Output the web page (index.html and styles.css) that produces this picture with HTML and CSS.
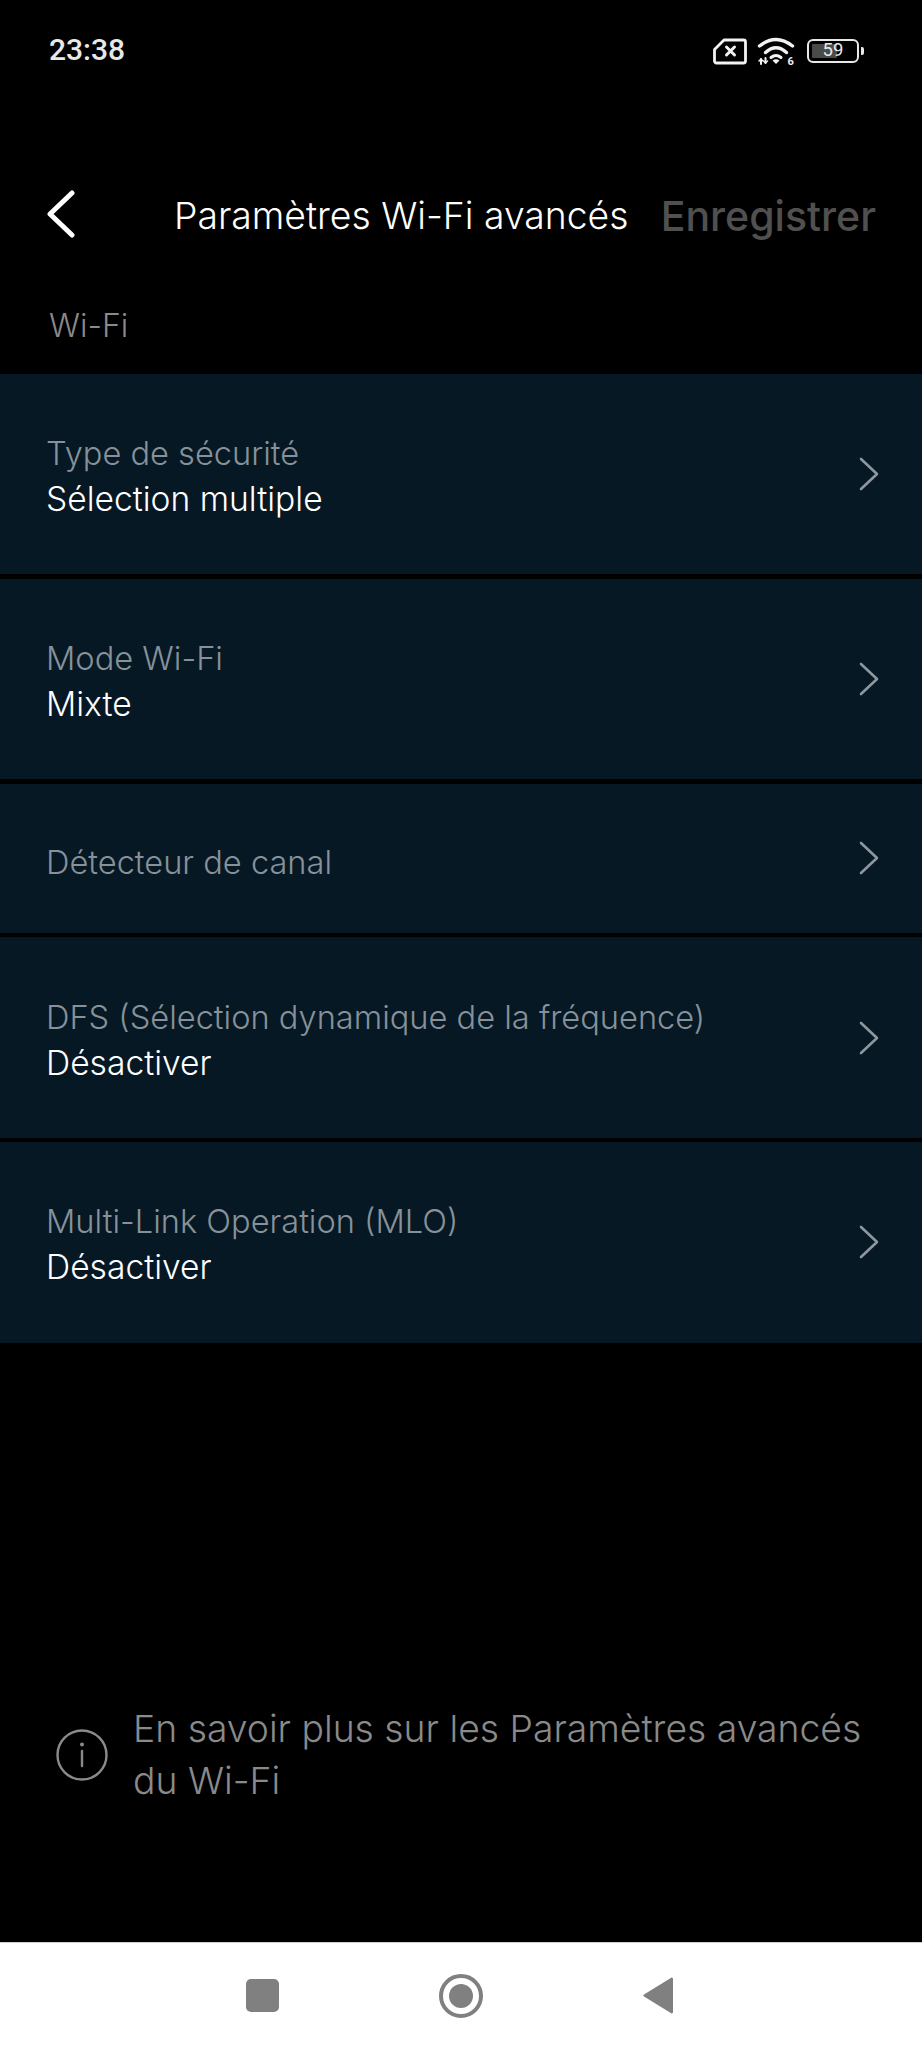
FILE: index.html
```html
<!DOCTYPE html>
<html lang="fr">
<head>
<meta charset="utf-8">
<title>Paramètres Wi-Fi avancés</title>
<link rel="stylesheet" href="styles.css">
</head>
<body>
<div class="screen">
  <div class="status">
    <span class="time">23:38</span>
    <div class="status-icons">
      <svg class="ic-sim" width="34" height="27" viewBox="0 0 34 27" fill="none" stroke="#f2f2f2" stroke-width="2.8" stroke-linejoin="round" stroke-linecap="round"><path d="M11 2H30.500a2 2 0 0 1 2 2V23a2 2 0 0 1-2 2H3.500a2 2 0 0 1-2-2V11.500Z"/><path d="M13.500 9l8 8M21.500 9l-8 8" stroke-width="3"/></svg>
      <svg class="ic-wifi" width="38" height="34" viewBox="0 0 38 34" fill="none" stroke="#f2f2f2" stroke-linecap="round"><path d="M2.500 9Q19-4 35.500 9" stroke-width="3.400"/><path d="M8.500 15.500Q19 6 29.500 15.500" stroke-width="3.400"/><path d="M14 20.500Q19 16.500 24 20.500" stroke-width="3"/><path d="M15.500 23.500Q19 21 22.500 23.500L19 27Z" fill="#f2f2f2" stroke="none"/><path d="M4 22v5M8.500 21v5" stroke-width="2"/><path d="M2 24l2-2 2 2M6.500 24l2 2 2-2" stroke-width="1.500"/><text x="30.500" y="27.500" class="wifi-six">6</text></svg>
      <div class="battery"><div class="battery-body"><div class="battery-fill"></div><span class="battery-num">59</span></div><div class="battery-tip"></div></div>
    </div>
  </div>

  <header class="nav">
    <svg class="back" width="30" height="48" viewBox="0 0 30 48" fill="none" stroke="#fff" stroke-width="5" stroke-linecap="round" stroke-linejoin="round"><path d="M26 3L4 24l22 21"/></svg>
    <h1 class="title">Paramètres Wi-Fi avancés</h1>
    <span class="save">Enregistrer</span>
  </header>

  <div class="section">Wi-Fi</div>

  <div class="list">
    <div class="row">
      <div class="row-text"><div class="label">Type de sécurité</div><div class="value">Sélection multiple</div></div>
      <svg class="chev" width="22" height="34" viewBox="0 0 22 34" fill="none" stroke="#8e979e" stroke-width="2.600" stroke-linecap="round" stroke-linejoin="round"><path d="M3 2l16 15L3 32"/></svg>
    </div>
    <div class="row">
      <div class="row-text"><div class="label">Mode Wi-Fi</div><div class="value">Mixte</div></div>
      <svg class="chev" width="22" height="34" viewBox="0 0 22 34" fill="none" stroke="#8e979e" stroke-width="2.600" stroke-linecap="round" stroke-linejoin="round"><path d="M3 2l16 15L3 32"/></svg>
    </div>
    <div class="row row-short">
      <div class="row-text"><div class="label">Détecteur de canal</div></div>
      <svg class="chev" width="22" height="34" viewBox="0 0 22 34" fill="none" stroke="#8e979e" stroke-width="2.600" stroke-linecap="round" stroke-linejoin="round"><path d="M3 2l16 15L3 32"/></svg>
    </div>
    <div class="row">
      <div class="row-text"><div class="label">DFS (Sélection dynamique de la fréquence)</div><div class="value">Désactiver</div></div>
      <svg class="chev" width="22" height="34" viewBox="0 0 22 34" fill="none" stroke="#8e979e" stroke-width="2.600" stroke-linecap="round" stroke-linejoin="round"><path d="M3 2l16 15L3 32"/></svg>
    </div>
    <div class="row">
      <div class="row-text"><div class="label">Multi-Link Operation (MLO)</div><div class="value">Désactiver</div></div>
      <svg class="chev" width="22" height="34" viewBox="0 0 22 34" fill="none" stroke="#8e979e" stroke-width="2.600" stroke-linecap="round" stroke-linejoin="round"><path d="M3 2l16 15L3 32"/></svg>
    </div>
  </div>

  <div class="spacer"></div>

  <div class="info">
    <svg class="info-ic" width="52" height="52" viewBox="0 0 52 52" fill="none" stroke="#8a8a8a" stroke-width="2.400" stroke-linecap="round"><circle cx="26" cy="26" r="24.500"/><path d="M26 22v15"/><circle cx="26" cy="15.500" r="2" fill="#8a8a8a" stroke="none"/></svg>
    <p class="info-text">En savoir plus sur les Paramètres avancés du Wi-Fi</p>
  </div>

  <div class="navbar">
    <div class="nav-square"></div>
    <div class="nav-circle"><div class="nav-dot"></div></div>
    <svg class="nav-back" width="30" height="37" viewBox="0 0 30 37"><path d="M30 2V35a1.300 1.300 0 0 1-2.200 1L1 19.500a1.300 1.300 0 0 1 0-2L27.800 1a1.300 1.300 0 0 1 2.200 1Z" fill="#808080"/></svg>
  </div>
</div>
</body>
</html>
```
FILE: styles.css
```css
* { box-sizing: border-box; }
html, body { margin: 0; padding: 0; background: #000; }
body { font-family: Inter, "Liberation Sans", sans-serif; }
.screen { width: 922px; height: 2048px; display: flex; flex-direction: column; background: #000; overflow: hidden; }
.status { height: 158px; padding: 30px 58px 0 49px; display: flex; justify-content: space-between; align-items: flex-start; flex-shrink: 0; }
.time { font-family: Roboto, sans-serif; font-weight: 500; font-size: 30px; line-height: 40px; color: #e8e8e8; }
.status-icons { display: flex; align-items: center; gap: 10px; padding-top: 7px; }
.ic-wifi { margin-bottom: -6px; }
.wifi-six { font: 700 11px Roboto, sans-serif; fill: #f2f2f2; stroke: none; }
.battery { display: flex; align-items: center; gap: 2px; margin-left: 2px; }
.battery-body { position: relative; width: 52px; height: 24px; border: 2.500px solid #e8e8e8; border-radius: 6px; padding: 3px; }
.battery-fill { width: 59%; height: 100%; background: #4a4a4a; border-radius: 1px; }
.battery-num { position: absolute; inset: 0; text-align: center; font: 400 18.500px/19px Roboto, sans-serif; color: #e8e8e8; }
.battery-tip { width: 3px; height: 8px; background: #e8e8e8; border-radius: 0 2px 2px 0; }
.nav { height: 114px; padding: 0 46px; display: flex; align-items: center; flex-shrink: 0; }
.back { flex-shrink: 0; margin-top: -2px; }
.title { margin: 0 0 0 98px; font-size: 37.300px; font-weight: 300; color: #fff; white-space: nowrap; }
.save { margin-left: auto; padding-top: 2px; font-size: 41px; font-weight: 500; color: #505050; white-space: nowrap; }
.section { height: 102px; padding: 34px 49px 0; font-size: 32px; font-weight: 300; color: #8a8a8a; line-height: 40px; flex-shrink: 0; }
.list { display: flex; flex-direction: column; gap: 4.400px; flex-shrink: 0; }
.row { height: 200.400px; background: #061823; padding: 0 42px 0 46px; display: flex; align-items: center; justify-content: space-between; }
.row-short { height: 149.500px; }
.row-text { padding-top: 4px; }
.row-short .row-text { padding-top: 7px; }
.label { font-size: 32.600px; font-weight: 300; color: #87919a; line-height: 46px; }
.value { font-size: 33.600px; font-weight: 300; color: #fff; line-height: 46px; }
.spacer { flex: 1; }
.info { display: flex; align-items: center; gap: 25px; padding: 0 37px 0 56px; margin-bottom: 135px; }
.info-ic { flex-shrink: 0; }
.info-text { margin: 0; font-size: 37.300px; font-weight: 300; line-height: 52px; color: #8a8a8a; }
.navbar { height: 106px; background: #fff; border-top: 1px solid #ccc; padding-right: 3px; display: flex; align-items: center; justify-content: center; gap: 160px; flex-shrink: 0; }
.nav-square { width: 33px; height: 33px; background: #808080; border-radius: 5px; }
.nav-circle { width: 44px; height: 44px; border: 4px solid #808080; border-radius: 50%; display: flex; align-items: center; justify-content: center; }
.nav-dot { width: 24px; height: 24px; background: #808080; border-radius: 50%; }
```
